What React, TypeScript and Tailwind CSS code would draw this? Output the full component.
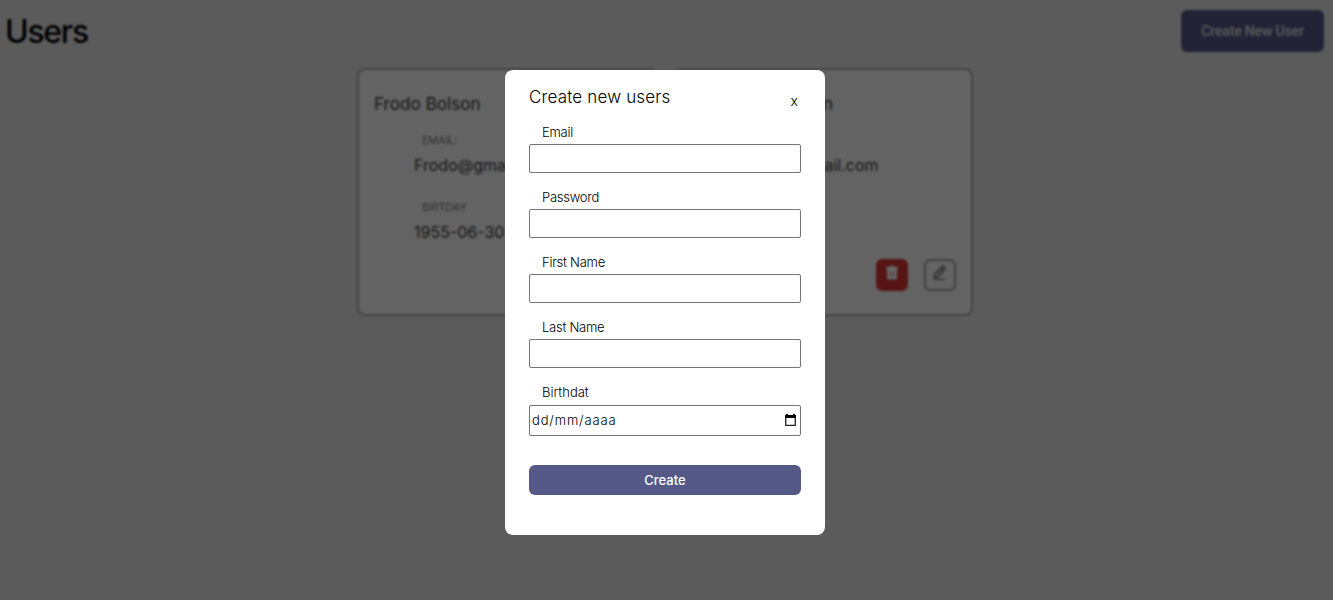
import type { ReactNode } from "react";

type User = { name: string; email: string; birthday: string };

const users: User[] = [
  { name: "Frodo Bolson", email: "Frodo@gmail.com", birthday: "1955-06-30" },
  { name: "Merriadoc Bolson", email: "Merryb@gmail.com", birthday: "1955-06-30" },
];

const fields = ["Email", "Password", "First Name", "Last Name"];

function TrashIcon() {
  return (
    <svg width="16" height="16" viewBox="0 0 16 16" fill="currentColor">
      <path d="M5.5 0.8h5v1.2h3.500v2h-12v-2h3.500z" />
      <path fillRule="evenodd" d="M3 4h10V13.200q0 1.300-1.300 1.300H4.300q-1.300 0-1.300-1.300zM6 7v4.500h.8V7zM9.200 7v4.500h.8V7z" />
    </svg>
  );
}

function PencilIcon() {
  return (
    <svg width="16" height="16" viewBox="0 0 16 16" fill="none" stroke="currentColor">
      <path d="M2.800 9.300 10 2q1-.8 2 0l.6.6q.8 1 0 2L5.500 11.700l-3.200.5z" strokeWidth="1.900" />
      <path d="m8.700 3.500 2.600 2.600" strokeWidth="1.900" />
      <path d="M2 14.200h11" strokeWidth="1.500" />
    </svg>
  );
}

function CalendarIcon() {
  return (
    <svg width="13" height="13" viewBox="0 0 13 13">
      <path d="M2 0h2v1h5V0h2v1h1v3H1V1h1z" fill="#000" />
      <path d="M1.700 3v8.300h9.600V3" fill="none" stroke="#222" strokeWidth="1.300" />
    </svg>
  );
}

function Detail({ label, children }: { label: string; children: ReactNode }) {
  return (
    <div className="h-[67px] pl-10">
      <dt className="pl-2 text-[11px] leading-4 tracking-[-0.25px] text-[#808080]">{label}</dt>
      <dd className="mt-[7px] text-[16px] leading-5 text-[#383838]">{children}</dd>
    </div>
  );
}

function UserCard({ user }: { user: User }) {
  return (
    <article className="flex h-[248px] flex-col rounded-lg border-2 border-[#acacac] bg-[#f8f8f8] px-[15px] pt-6 pb-[23px]">
      <h2 className="text-[17px] leading-5 tracking-[0.07px] text-[#383838]">{user.name}</h2>
      <dl className="pt-[18px]">
        <Detail label="EMAIL:">{user.email}</Detail>
        <Detail label="BIRTDAY">{user.birthday}</Detail>
      </dl>
      <div className="-mt-[7px] flex justify-end gap-4">
        <button className="flex h-8 w-8 justify-center rounded-md bg-[#d63434] pt-1.5 text-white"><TrashIcon /></button>
        <button className="flex h-8 w-8 justify-center rounded-md border-2 border-[#a0a0a0] pt-1 text-[#808080]"><PencilIcon /></button>
      </div>
    </article>
  );
}

export default function App() {
  return (
    <div className="relative h-[600px] overflow-hidden bg-[#e4e4e4] font-['Inter','Noto_Sans',sans-serif] text-black">
      <header className="flex h-[68px] items-start justify-between pl-[5px] pr-[9px] pt-2.5">
        <h1 className="text-[32px] font-medium leading-[44px] tracking-[-1.3px]">Users</h1>
        <button className="h-[42px] w-[143px] rounded-md bg-[#555987] font-['Roboto',sans-serif] text-[14px] font-medium tracking-[-0.15px] text-[#e0e0e0]">
          Create New User
        </button>
      </header>
      <main className="ml-[357px] grid w-[616px] grid-cols-2 gap-4">
        {users.map((user) => <UserCard key={user.name} user={user} />)}
      </main>
      <div className="absolute inset-0 flex items-start justify-center bg-black/60 pr-[3px] pt-[70px] backdrop-blur-[0.8px]">
        <section className="h-[465px] w-80 rounded-lg bg-white px-6 pt-[17px]">
          <div className="flex h-[37px] justify-between">
            <h2 className="text-[17px] font-light leading-5 tracking-[0.17px]">Create new users</h2>
            <button className="mt-1 mr-[3px] h-5 text-[14px] font-light leading-5">x</button>
          </div>
          <form>
            {fields.map((field) => (
              <label key={field} className="block h-[65px]">
                <span className="block pl-[13px] text-[13px] font-light leading-4 tracking-[-0.25px]">{field}</span>
                <input className="mt-1 block h-[29px] w-full rounded-[2px] border border-[#767676] px-1 outline-none" />
              </label>
            ))}
            <div>
              <span className="block pl-[13px] text-[13px] font-light leading-4">Birthdat</span>
              <div className="mt-[5px] flex h-[31px] items-center justify-between rounded-[2px] border border-[#767676] pl-[2px] pr-[3px] text-[13px] font-light">
                <span className="tracking-[0.85px]">dd/mm/aaaa</span>
                <CalendarIcon />
              </div>
            </div>
            <button type="button" className="mt-[29px] h-[30px] w-full rounded-md bg-[#555987] pt-px text-[13px] font-medium text-white">Create</button>
          </form>
        </section>
      </div>
    </div>
  );
}
